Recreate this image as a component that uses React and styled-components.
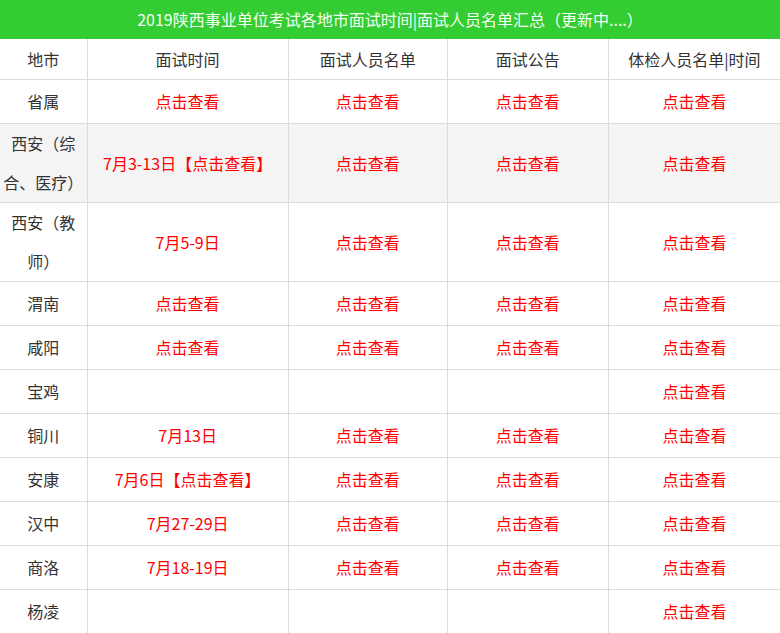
import React from "react";
import styled, { createGlobalStyle } from "styled-components";

const GlobalStyle = createGlobalStyle`
  body {
    margin: 0;
    background: #fff;
    font-family: "Microsoft YaHei", "Noto Sans CJK SC", "Noto Sans", sans-serif;
  }
`;

const LINK = "点击查看";

const rows = [
  { city: "省属", cells: [LINK, LINK, LINK, LINK] },
  { city: "西安（综合、医疗）", cells: ["7月3-13日【点击查看】", LINK, LINK, LINK], shaded: true },
  { city: "西安（教师）", cells: ["7月5-9日", LINK, LINK, LINK] },
  { city: "渭南", cells: [LINK, LINK, LINK, LINK] },
  { city: "咸阳", cells: [LINK, LINK, LINK, LINK] },
  { city: "宝鸡", cells: ["", "", "", LINK] },
  { city: "铜川", cells: ["7月13日", LINK, LINK, LINK] },
  { city: "安康", cells: ["7月6日【点击查看】", LINK, LINK, LINK] },
  { city: "汉中", cells: ["7月27-29日", LINK, LINK, LINK] },
  { city: "商洛", cells: ["7月18-19日", LINK, LINK, LINK] },
  { city: "杨凌", cells: ["", "", "", LINK] },
];

const columns = ["地市", "面试时间", "面试人员名单", "面试公告", "体检人员名单|时间"];
const widths = [87, 201, 159, 161, 172];

const App = () => {
  return (
    <>
      <GlobalStyle />
      <Wrapper>
        <Title>2019陕西事业单位考试各地市面试时间|面试人员名单汇总（更新中....）</Title>
        <Table>
          <colgroup>
            {widths.map((w, i) => (
              <col key={i} style={{ width: w }} />
            ))}
          </colgroup>
          <thead>
            <tr>
              {columns.map((c) => (
                <HeadCell key={c}>{c}</HeadCell>
              ))}
            </tr>
          </thead>
          <tbody>
            {rows.map((row) => (
              <Row key={row.city} $shaded={row.shaded}>
                <CityCell>{row.city}</CityCell>
                {row.cells.map((c, i) => (
                  <Cell key={i}>{c}</Cell>
                ))}
              </Row>
            ))}
          </tbody>
        </Table>
      </Wrapper>
    </>
  );
};

export default App;

const Wrapper = styled.div`
  width: 780px;
`;

const Title = styled.div`
  height: 39px;
  background-color: #33cc33;
  color: #f4fff4;
  font-size: 16px;
  line-height: 39px;
  text-align: center;
`;

const Table = styled.table`
  width: 781px;
  border-collapse: collapse;
  table-layout: fixed;
  font-size: 16px;
`;

const HeadCell = styled.th`
  height: 40px;
  padding: 0;
  font-weight: normal;
  color: #333;
  text-align: center;
  border: 1px solid #dcdcdc;
  border-top: none;
  &:first-child {
    border-left: none;
  }
`;

const Row = styled.tr`
  background-color: ${(p) => (p.$shaded ? "#f4f4f4" : "#fff")};
`;

const Cell = styled.td`
  height: 43px;
  padding: 0 3px;
  line-height: 39px;
  color: #f00;
  text-align: center;
  vertical-align: middle;
  border: 1px solid #dcdcdc;
`;

const CityCell = styled(Cell)`
  color: #333;
  border-left: none;
`;
